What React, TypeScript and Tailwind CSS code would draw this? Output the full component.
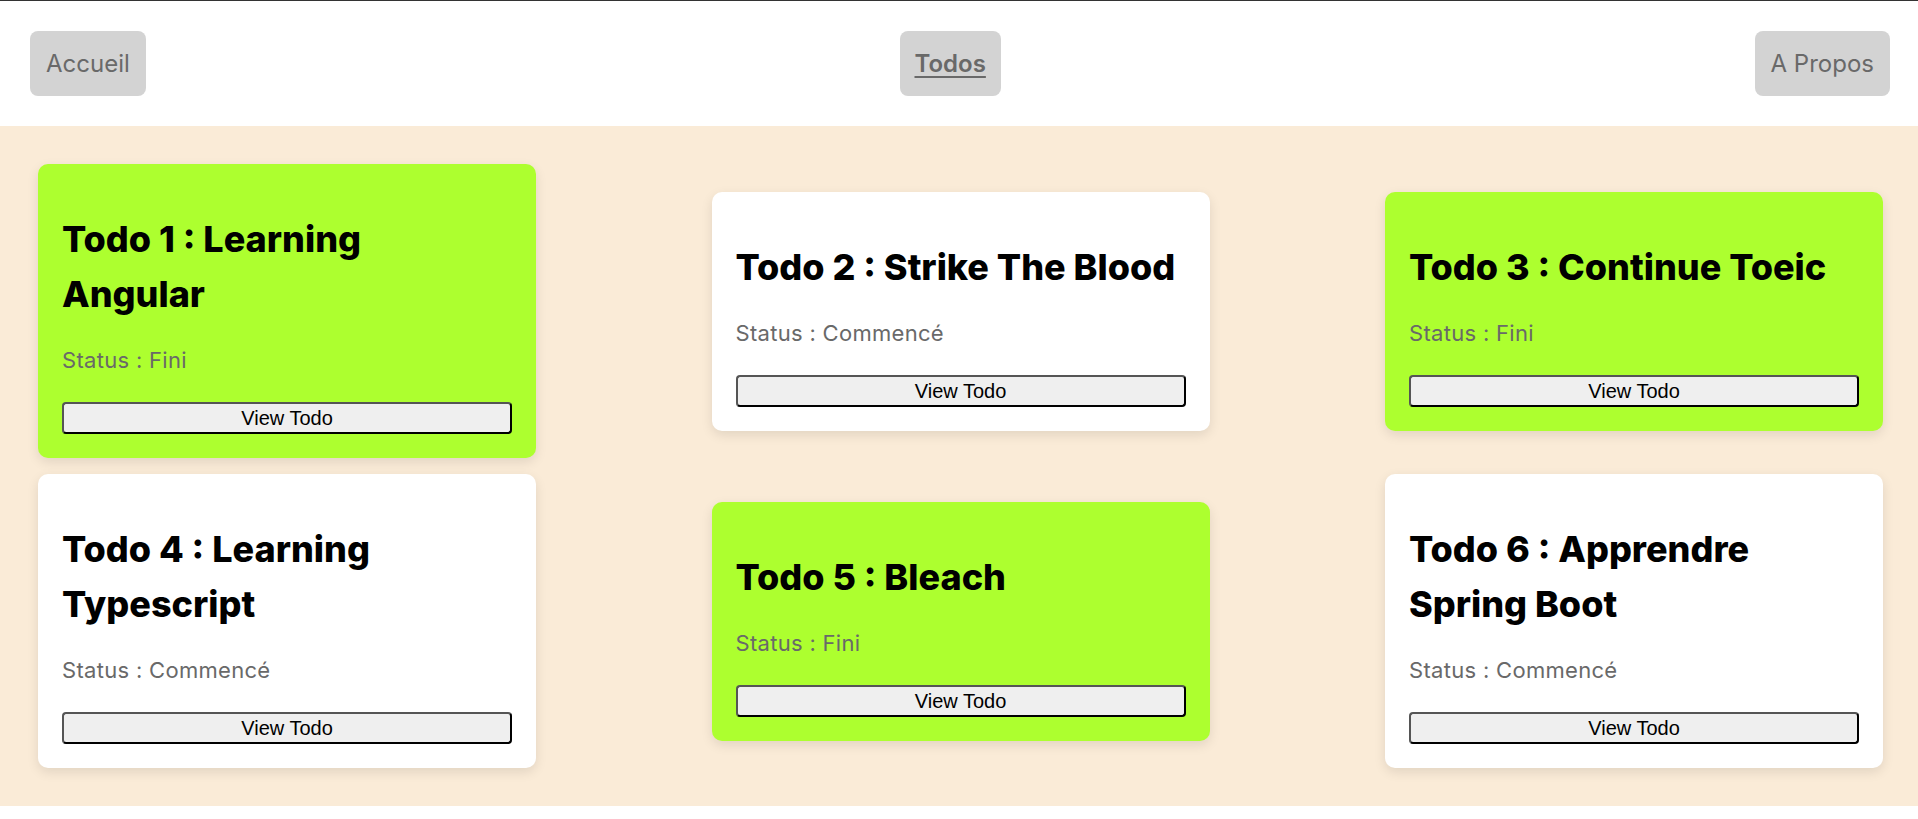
import React from "react";

type Todo = { id: number; lines: string[]; status: string; done: boolean };

const todos: Todo[] = [
  { id: 1, lines: ["Todo 1 : Learning", "Angular"], status: "Fini", done: true },
  { id: 2, lines: ["Todo 2 : Strike The Blood"], status: "Commencé", done: false },
  { id: 3, lines: ["Todo 3 : Continue Toeic"], status: "Fini", done: true },
  { id: 4, lines: ["Todo 4 : Learning", "Typescript"], status: "Commencé", done: false },
  { id: 5, lines: ["Todo 5 : Bleach"], status: "Fini", done: true },
  { id: 6, lines: ["Todo 6 : Apprendre", "Spring Boot"], status: "Commencé", done: false },
];

function Card({ todo }: { todo: Todo }) {
  return (
    <div
      className={
        (todo.done ? "bg-[#adff2f]" : "bg-white") +
        " w-[498px] rounded-[10px] p-6 shadow-[0_4px_12px_rgba(0,0,0,0.1)]"
      }
    >
      <h2 className="mt-[24px] text-[36px] leading-[55px] font-extrabold text-black">
        {todo.lines.map((l, i) => (
          <span key={i} className="block whitespace-nowrap">
            {l}
          </span>
        ))}
      </h2>
      <p className="mt-[23px] text-[22px] leading-[30px] tracking-[0.3px] text-[#696969]">
        Status : {todo.status}
      </p>
      <button className="mt-[27px] w-full h-[32px] flex items-center justify-center rounded-[4px] border-2 border-t-[#555] border-l-[#555] border-b-black border-r-black bg-[#efefef] text-black text-[20px] leading-[24px] font-['Liberation_Sans',Arial,sans-serif]">
        View Todo
      </button>
    </div>
  );
}

export default function App() {
  return (
    <div className="min-h-screen bg-white font-['Inter','Noto_Sans',sans-serif]">
      <header className="border-t border-[#333] bg-white flex items-center justify-between pl-[30px] pr-[28px] py-[30px]">
        <a className="bg-[#d3d3d3] rounded-lg px-4 py-4 text-[24px] leading-[33px] text-[#696969]">
          Accueil
        </a>
        <a className="bg-[#d3d3d3] rounded-lg px-[15px] py-4 text-[24px] leading-[33px] text-[#696969] font-semibold underline underline-offset-4 decoration-2">
          Todos
        </a>
        <a className="bg-[#d3d3d3] rounded-lg px-4 py-4 text-[24px] leading-[33px] text-[#696969]">
          A Propos
        </a>
      </header>
      <main className="bg-[#faebd7] pl-[38px] pr-[35px] pt-[38px] pb-[38px] flex flex-wrap items-center justify-between gap-y-4">
        {todos.map((t) => (
          <Card key={t.id} todo={t} />
        ))}
      </main>
    </div>
  );
}
